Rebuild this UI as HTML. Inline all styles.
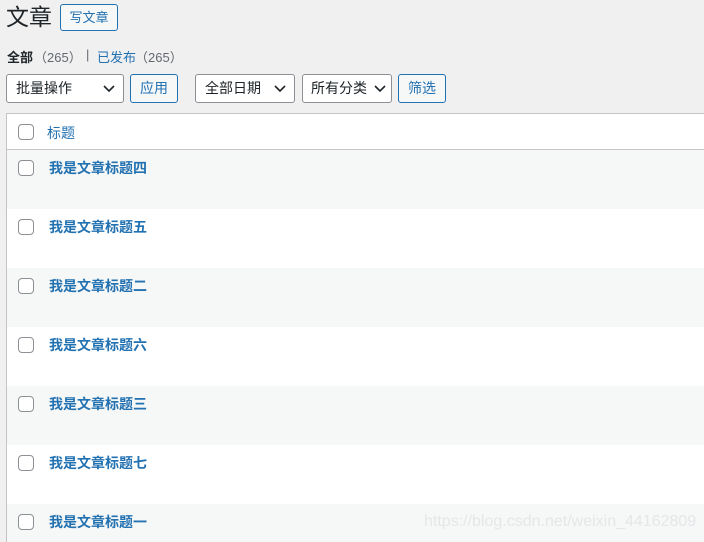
<!DOCTYPE html>
<html><head><meta charset="utf-8"><style>
*{box-sizing:border-box;margin:0;padding:0}
html,body{width:704px;height:542px;overflow:hidden}
body{background:#f0f0f1;font-family:"Liberation Sans","Noto Sans CJK SC",sans-serif;font-size:14px;color:#1d2327;position:relative}
.abs{position:absolute}
h1{position:absolute;left:6px;top:2px;font-size:23px;font-weight:400;line-height:30px}
.btn{position:absolute;border:1px solid #2271b1;color:#2271b1;background:#f6f7f7;border-radius:3px;text-align:center;font-size:13px}
.sel{position:absolute;border:1px solid #8c8f94;background:#fff;border-radius:3px;height:29px;line-height:27px;padding-left:9px;font-size:14px}
.sel svg{position:absolute;right:8px;top:10px}
.tbl{position:absolute;left:6px;top:113px;width:710px;height:440px;border:1px solid #c3c4c7;background:#fff}
.row{position:absolute;left:0;width:100%;height:59px}
.cb{position:absolute;left:11px;width:16px;height:16px;border:1px solid #8c8f94;border-radius:4px;background:#fff}
.t{position:absolute;left:42px;font-weight:700;color:#2271b1;font-size:14px}
.st{position:absolute;top:47px;font-size:13px;white-space:nowrap}
</style></head><body>
<h1>文章</h1>
<div class="btn" style="left:60px;top:4px;width:58px;height:27px;line-height:25px">写文章</div>
<div class="st" style="left:7px"><b>全部</b></div>
<div class="st" style="left:34px;color:#646970">（265）</div>
<div class="st" style="left:86px;color:#646970">|</div>
<div class="st" style="left:97px;color:#2271b1">已发布</div>
<div class="st" style="left:135px;color:#646970">（265）</div>
<div class="sel" style="left:6px;top:74px;width:118px">批量操作<svg width="12" height="8"><path d="M1 1l5 5 5-5" stroke="#1d2327" stroke-width="1.6" fill="none"/></svg></div>
<div class="btn" style="left:130px;top:74px;width:48px;height:29px;line-height:27px;font-size:14px">应用</div>
<div class="sel" style="left:195px;top:74px;width:100px">全部日期<svg width="12" height="8"><path d="M1 1l5 5 5-5" stroke="#1d2327" stroke-width="1.6" fill="none"/></svg></div>
<div class="sel" style="left:302px;top:74px;width:90px;padding-left:8px">所有分类<svg width="12" height="8" style="right:5px"><path d="M1 1l5 5 5-5" stroke="#1d2327" stroke-width="1.6" fill="none"/></svg></div>
<div class="btn" style="left:398px;top:74px;width:48px;height:29px;line-height:27px;font-size:14px">筛选</div>
<div class="tbl">
<div class="row" style="top:0;height:36px;border-bottom:1px solid #c3c4c7"><div class="cb" style="top:10px"></div><div class="t" style="left:40px;top:9px;font-weight:400">标题</div></div>
<div class="row" style="top:36px;background:#f6f7f7"><div class="cb" style="top:10px"></div><div class="t" style="top:8px">我是文章标题四</div></div>
<div class="row" style="top:95px"><div class="cb" style="top:10px"></div><div class="t" style="top:8px">我是文章标题五</div></div>
<div class="row" style="top:154px;background:#f6f7f7"><div class="cb" style="top:10px"></div><div class="t" style="top:8px">我是文章标题二</div></div>
<div class="row" style="top:213px"><div class="cb" style="top:10px"></div><div class="t" style="top:8px">我是文章标题六</div></div>
<div class="row" style="top:272px;background:#f6f7f7"><div class="cb" style="top:10px"></div><div class="t" style="top:8px">我是文章标题三</div></div>
<div class="row" style="top:331px"><div class="cb" style="top:10px"></div><div class="t" style="top:8px">我是文章标题七</div></div>
<div class="row" style="top:390px;background:#f6f7f7"><div class="cb" style="top:10px"></div><div class="t" style="top:8px">我是文章标题一</div></div>
</div>
<div class="abs" style="left:424px;top:513px;font-size:16px;color:#e4e6e8;white-space:nowrap">https://blog.csdn.net/weixin_44162809</div>
</body></html>
